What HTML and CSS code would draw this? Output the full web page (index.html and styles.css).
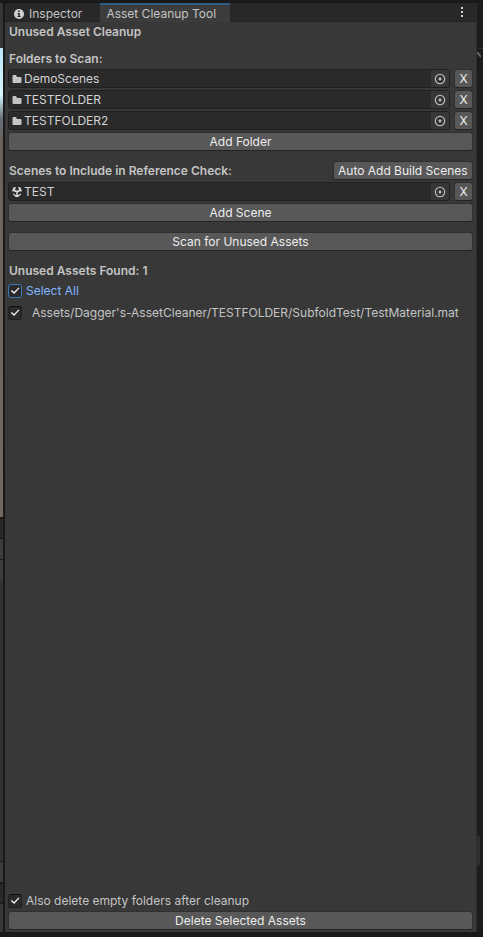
FILE: index.html
```html
<!DOCTYPE html>
<html lang="en">
<head>
<meta charset="utf-8">
<title>Asset Cleanup Tool</title>
<link rel="stylesheet" href="styles.css">
</head>
<body>
<svg width="0" height="0" class="defs" aria-hidden="true">
  <symbol id="folder" viewBox="0 0 10 10"><path fill="#c4c4c4" d="M.5 2q0-1 1-1h2.500l1 2h3.500q1 0 1 1v4q0 1-1 1h-7q-1 0-1-1z"/></symbol>
  <symbol id="target" viewBox="0 0 12 12"><circle cx="6" cy="6" r="4.7" fill="none" stroke="#c4c4c4" stroke-width="1.1"/><circle cx="6" cy="6" r="1.4" fill="#c4c4c4"/></symbol>
  <symbol id="scene" viewBox="0 0 10 10"><path fill="#d8d8d8" d="M2.4.2 4 .1 3.5 1.500 2.700 2.500 5 3.700 7.300 2.500 6.500 1.500 6 .1 8.600.5 9.900 4 8.900 5 8.500 3.900 5.700 5.500V8L7 7.700 8.900 6.200 9 7.500 6.200 9.900H3.800L1 7.500 1.100 6.200 3 7.700 4.300 8V5.500L1.500 3.900 1.100 5 .1 4 1.400.5z"/></symbol>
</svg>
<div class="backdrop">
  <div class="left-view" aria-hidden="true">
    <div class="view-head"></div><div class="view-image"></div><div class="view-tabs"></div><div class="view-bar"></div><div class="view-bar"></div><div class="view-body"></div><div class="view-bar"></div><div class="view-tabs"></div><div class="view-foot"></div>
  </div>
  <main class="panel">
    <nav class="tabs">
      <button class="tab" type="button"><svg class="info" viewBox="0 0 10 10"><circle cx="5" cy="5" r="5" fill="#d2d2d2"/><path fill="#282828" d="M4.200 1.500h1.600V3H4.200zM3.500 4h2.300v3h.8v1H3.400V7h.8V5h-.7z"/></svg>Inspector</button>
      <button class="tab active" type="button">Asset Cleanup Tool</button>
      <button class="menu" type="button" aria-label="More options"><svg viewBox="0 0 2 10"><path fill="#d2d2d2" d="M0 0h2v2H0zM0 4h2v2H0zM0 8h2v2H0z"/></svg></button>
    </nav>
    <div class="content">
      <h1 class="heading">Unused Asset Cleanup</h1>
      <section class="folders">
        <h2 class="heading">Folders to Scan:</h2>
        <div class="stack">
          <div class="row"><div class="field"><svg class="icon"><use href="#folder"/></svg><span class="name">DemoScenes</span><button class="pick" type="button" aria-label="Pick folder"><svg><use href="#target"/></svg></button></div><button class="btn remove" type="button">X</button></div>
          <div class="row"><div class="field"><svg class="icon"><use href="#folder"/></svg><span class="name">TESTFOLDER</span><button class="pick" type="button" aria-label="Pick folder"><svg><use href="#target"/></svg></button></div><button class="btn remove" type="button">X</button></div>
          <div class="row"><div class="field"><svg class="icon"><use href="#folder"/></svg><span class="name">TESTFOLDER2</span><button class="pick" type="button" aria-label="Pick folder"><svg><use href="#target"/></svg></button></div><button class="btn remove" type="button">X</button></div>
          <button class="btn" type="button">Add Folder</button>
        </div>
      </section>
      <section class="group stack">
        <div class="row"><h2 class="heading grow">Scenes to Include in Reference Check:</h2><button class="btn auto" type="button">Auto Add Build Scenes</button></div>
        <div class="row"><div class="field"><svg class="icon"><use href="#scene"/></svg><span class="name">TEST</span><button class="pick" type="button" aria-label="Pick scene"><svg><use href="#target"/></svg></button></div><button class="btn remove" type="button">X</button></div>
        <button class="btn" type="button">Add Scene</button>
      </section>
      <button class="btn group" type="button">Scan for Unused Assets</button>
      <section class="group">
        <h2 class="heading">Unused Assets Found: 1</h2>
        <div class="results">
          <label class="check focused"><input type="checkbox" checked>Select All</label>
          <label class="check asset"><input type="checkbox" checked>Assets/Dagger's-AssetCleaner/TESTFOLDER/SubfoldTest/TestMaterial.mat</label>
        </div>
      </section>
      <footer class="actions">
        <label class="check"><input type="checkbox" checked>Also delete empty folders after cleanup</label>
        <button class="btn" type="button">Delete Selected Assets</button>
      </footer>
    </div>
  </main>
  <div class="right-view" aria-hidden="true"><div class="right-top"></div><svg class="nub" viewBox="0 0 4 6"><path d="M0 0l4 5" fill="none" stroke="#666" stroke-width="2"/></svg><div class="right-space"></div><div class="scroll"></div></div>
</div>
</body>
</html>
```
FILE: styles.css
```css
* { box-sizing: border-box; }
body { margin: 0; background: #191919; color: #c4c4c4; font: 12px/19px Inter, sans-serif; }
button { font: inherit; color: inherit; border: 0; padding: 0; margin: 0; }
svg { display: block; }
.defs { position: absolute; }
.backdrop { display: flex; min-height: 100vh; padding: 3px 0 5px; }

.left-view { width: 3px; margin-right: 2px; display: flex; flex-direction: column; }
.view-head { height: 45px; background: #353535; }
.view-image { height: 469px; background: linear-gradient(#bfe5fa, #d4f7ff 10%, #657078 15%, #6b625d 19%, #716862); }
.view-tabs { height: 19px; margin-top: 2px; background: #282828; }
.view-bar { height: 20px; margin-top: 1px; background: #3c3c3c; }
.view-body { flex: 1; background: #333; }
.view-foot { height: 28px; margin-top: 1px; background: #383838; }

.right-view { width: 7px; display: flex; flex-direction: column; background: #1c1c1c; border-left: 1px solid #2d2d2d; }
.right-top { height: 46px; border-bottom: 1px solid #2b2b2b; }
.nub { width: 4px; height: 6px; margin-top: 3px; }
.right-space { flex: 1; }
.scroll { width: 3px; height: 30px; margin-bottom: 66px; background: #303030; border-radius: 0 2px 2px 0; }

.panel { flex: 1; min-width: 0; display: flex; flex-direction: column; background: #383838; border-radius: 3px 3px 0 0; overflow: hidden; }
.tabs { display: flex; height: 19px; background: #282828; }
.tab { display: flex; align-items: center; padding: 3px 18px 0 9px; background: none; border-bottom: 1px solid #232323; }
.tab.active { padding: 0 14px 0 6px; background: #3c3c3c; border-top: 2px solid #2c5d87; border-bottom: 0; }
.info { width: 10px; height: 10px; margin-right: 5px; }
.menu { flex: 1; display: flex; justify-content: flex-end; align-items: center; padding-right: 13px; background: none; border-bottom: 1px solid #232323; }
.menu svg { width: 2px; height: 10px; }

.content { flex: 1; display: flex; flex-direction: column; padding: 0 3px 2px; }
.heading { margin: 0; padding-left: 1px; font-size: 12px; font-weight: 600; line-height: 19px; }
.folders { margin-top: 8px; }
.folders .stack { margin-top: 1px; }
.group { margin-top: 10px; }
.stack { display: flex; flex-direction: column; gap: 2px; }
.row { display: flex; gap: 4px; }
.grow { flex: 1; }

.btn { height: 19px; line-height: 17px; background: #585858; color: #eee; border: 1px solid #303030; border-bottom-color: #242424; border-radius: 3px; }
.remove { width: 19px; }
.auto { padding: 0 4px; width: 140px; text-align: left; white-space: nowrap; }
.field { flex: 1; min-width: 0; display: flex; align-items: center; height: 19px; padding-left: 3px; background: #2a2a2a; border: 1px solid #202020; border-radius: 3px; color: #d2d2d2; }
.icon { width: 10px; height: 10px; margin-right: 2px; }
.name { flex: 1; line-height: 17px; }
.pick { display: flex; align-items: center; justify-content: center; width: 18px; height: 17px; padding-right: 1px; background: #373737; border-radius: 0 2px 2px 0; }
.pick svg { width: 12px; height: 12px; }

.check { display: flex; align-items: center; gap: 4px; height: 19px; }
.check input { appearance: none; width: 14px; height: 14px; margin: 0; flex: none; background: #2a2a2a; border: 1px solid #212121; border-top-color: #0d0d0d; border-radius: 3px; }
.check input:checked::before { content: ""; display: block; width: 12px; height: 12px; background: #eee; clip-path: polygon(15% 54%, 24% 46%, 42% 63%, 79% 24%, 87% 32%, 43% 79%); }
.check.focused { color: #81b4ff; }
.check.focused input { border-color: #3a79bb; }
.asset { gap: 10px; }
.results { display: flex; flex-direction: column; gap: 3px; padding-top: 1px; }
.actions { display: flex; flex-direction: column; gap: 1px; margin-top: auto; }
```
